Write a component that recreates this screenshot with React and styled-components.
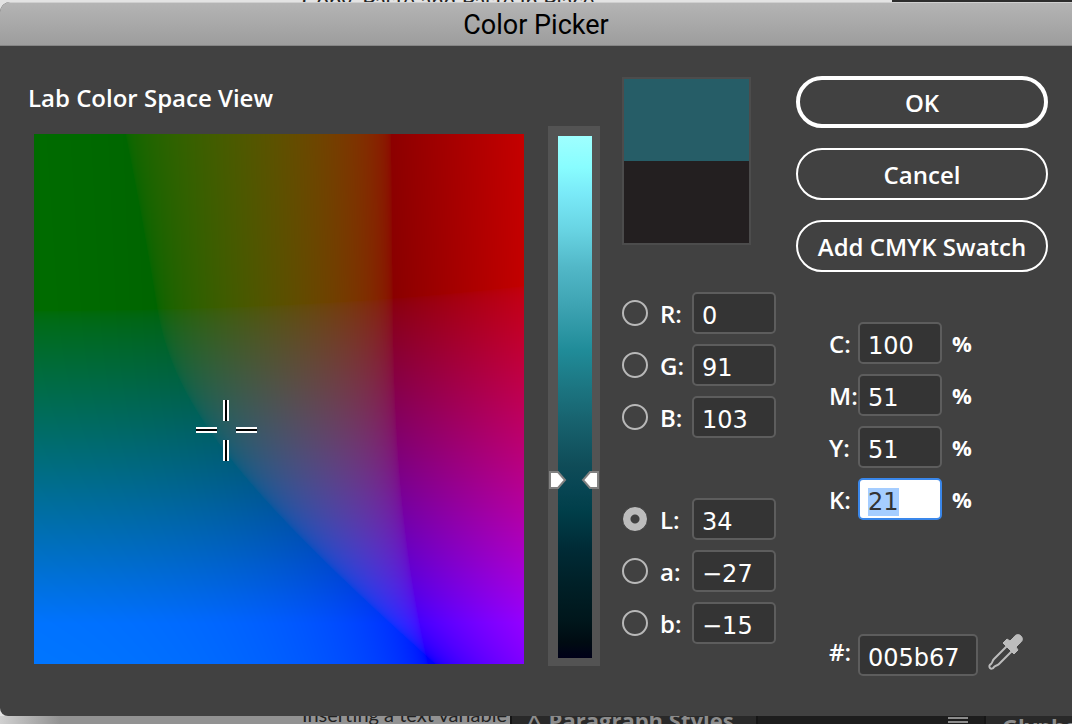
import * as React from "react";
import styled, { createGlobalStyle } from "styled-components";

const GlobalStyle = createGlobalStyle`
  * {
    box-sizing: border-box;
  }

  body {
    margin: 0;
    background-color: #232323;
  }
`;

const Page = styled.div`
  min-height: 100vh;
  display: flex;
  flex-direction: column;
  overflow: hidden;
  background: linear-gradient(90deg, #e3e3e3 892px, #2c2c2c 892px);
`;

const Strip = styled.div`
  height: ${(props) => props.height};
  display: flex;
  align-items: ${(props) => props.$align};
  overflow: hidden;
`;

const DocText = styled.div`
  flex: 0 0 ${(props) => props.width};
  height: 100%;
  padding-left: 302px;
  display: flex;
  align-items: inherit;
  overflow: hidden;
  white-space: nowrap;
  background: ${(props) => props.$bg};
  color: #222222;
  font: ${(props) => props.size}/20px "Lato", sans-serif;
`;

const PanelTab = styled.div`
  flex: ${(props) => props.$flex};
  height: 100%;
  padding: 0 16px;
  display: flex;
  align-items: ${(props) => props.$align || "center"};
  justify-content: ${(props) => props.$justify || "flex-start"};
  gap: 8px;
  overflow: hidden;
  white-space: nowrap;
  background-color: ${(props) => props.$bg};
  border-left: 2px solid #161616;
  color: #8c8c8c;
  font: 700 22px/20px "Open Sans", sans-serif;
`;

const Dialog = styled.main`
  background-color: #414141;
  border-radius: 10px 0 0 8px;
  overflow: hidden;
  color: white;
  font-family: "Open Sans", sans-serif;
`;

const TitleBar = styled.h1`
  margin: 0;
  height: 44px;
  border-top: 1px solid #cfcfcf;
  border-bottom: 1px solid #858585;
  background: linear-gradient(#b4b4b4, #9d9d9d);
  color: black;
  font: 400 27px/45px "Roboto", sans-serif;
  text-align: center;
`;

const Body = styled.form`
  display: flex;
  padding: 30px 24px 40px 28px;
`;

const FieldCol = styled.section`
  flex: 1;
  min-width: 0;
  margin-right: 24px;
`;

const FieldTitle = styled.h2`
  margin: 0 0 14px;
  font-size: 24px;
  font-weight: 600;
  line-height: 44px;
`;

const FieldCont = styled.div`
  position: relative;
  height: 530px;
  margin-left: 6px;
`;

const FieldCanvas = styled.canvas`
  display: block;
  width: 100%;
  height: 100%;
`;

const Crosshair = styled.svg`
  position: absolute;
  width: 62px;
  height: 62px;
  transform: translate(-50%, -50%);
`;

const SliderCont = styled.div`
  position: relative;
  flex: 0 0 52px;
  height: 540px;
  margin: 50px 22px 0 0;
  padding: 10px 8px 8px 10px;
  background-color: #535353;
`;

const Ramp = styled.div`
  height: 100%;
  background: linear-gradient(
    #9fffff,
    #88fdff 6%,
    #7aeaf8 11%,
    #68d4e3 18%,
    #52b8c8 25%,
    #3ca2b1 33%,
    #208c99 41%,
    #1c7682 48%,
    #186470 54%,
    #0f4c58 63%,
    #084654 67%,
    #003e49 72%,
    #002b36 79%,
    #002027 86%,
    #00161b 93%,
    #000b12 97%,
    #000018
  );
`;

const RangeInput = styled.input`
  position: absolute;
  inset: 0;
  width: 100%;
  height: 100%;
  margin: 0;
  opacity: 0;
  writing-mode: vertical-lr;
  direction: rtl;
`;

const Markers = styled.svg`
  position: absolute;
  left: 0;
  width: 52px;
  height: 18px;
  transform: translateY(-50%);
`;

const ValuesCol = styled.section`
  flex: 0 0 154px;
  margin: 1px 20px 0 0;
`;

const Swatch = styled.div`
  width: 129px;
  height: 168px;
  margin-bottom: 47px;
  border: 2px solid #4c4c4c;
  background: linear-gradient(#265d67 50%, #231f20 50%);
`;

const Group = styled.div`
  display: flex;
  flex-direction: column;
  gap: 10px;
  margin-bottom: ${(props) => props.$space || "0"};
`;

const Row = styled.div`
  display: flex;
  align-items: ${(props) => props.$align || "center"};
`;

const Radio = styled.input`
  appearance: none;
  flex: none;
  width: 26px;
  height: 26px;
  margin: 0 12px 0 0;
  border: 2px solid #b8b8b8;
  border-radius: 50%;

  &:checked {
    border-width: 1px;
    border-color: #414141;
    background: radial-gradient(circle, #414141 4px, #bcbcbc 5px);
  }
`;

const RowLabel = styled.label`
  flex: 0 0 ${(props) => props.width};
  padding-top: 2px;
  font-size: 24px;
  font-weight: 600;
  line-height: ${(props) => props.$line || "40px"};
  white-space: nowrap;
`;

const ValueInput = styled.input`
  flex: none;
  width: ${(props) => props.$width || "84px"};
  height: 42px;
  padding: 6px 8px 0;
  border: 2px solid #5d5d5d;
  border-radius: 5px;
  background-color: #343434;
  color: white;
  font-family: "DejaVu Sans", sans-serif;
  font-size: 24px;

  &:focus {
    outline: none;
    border-color: #3a87ea;
    background-color: white;
    color: #333333;
  }

  &::selection {
    background-color: #a5cdff;
    color: #333333;
  }
`;

const Percent = styled.span`
  margin-left: 10px;
  font-size: 22px;
  font-weight: 700;
`;

const ActionsCol = styled.section`
  flex: 0 0 252px;
`;

const Buttons = styled.div`
  display: flex;
  flex-direction: column;
  gap: 20px;
  margin-bottom: 50px;
`;

const Button = styled.button`
  height: 52px;
  padding: 0;
  border: ${(props) => (props.$primary ? "4px" : "2px")} solid white;
  border-radius: 26px;
  background: none;
  color: white;
  font: 600 24px "Open Sans", sans-serif;
`;

const Inks = styled.div`
  padding-left: 33px;
`;

const IconButton = styled.button`
  width: 36px;
  height: 36px;
  margin-left: 10px;
  padding: 0;
  border: 0;
  background: none;
`;

// Lab (D50) to Adobe RGB, out of gamut channels are clipped
function labToRgb(L, a, b) {
  const inv = (t) => (t > 6 / 29 ? t * t * t : (t - 16 / 116) / 7.787);
  const fy = (L + 16) / 116;
  const X = 0.9642 * inv(fy + a / 500);
  const Y = inv(fy);
  const Z = 0.8249 * inv(fy - b / 200);
  return [
    1.9625 * X - 0.6107 * Y - 0.3414 * Z,
    -0.9788 * X + 1.9161 * Y + 0.0334 * Z,
    0.0287 * X - 0.1407 * Y + 1.3493 * Z,
  ].map((v) => Math.round(255 * Math.pow(Math.min(1, Math.max(0, v)), 1 / 2.2)));
}

const lab = { L: 34, a: -27, b: -15 };

const rgbRows = [
  ["R", "0"],
  ["G", "91"],
  ["B", "103"],
];

const labRows = [
  ["L", "34"],
  ["a", "−27"],
  ["b", "−15"],
];

const cmykRows = [
  ["C", "100"],
  ["M", "51"],
  ["Y", "51"],
  ["K", "21"],
];

function ColorField() {
  const canvas = React.useRef(null);

  React.useLayoutEffect(() => {
    const { width, height } = canvas.current;
    const ctx = canvas.current.getContext("2d");
    const image = ctx.createImageData(width, height);
    for (let y = 0; y < height; y++) {
      for (let x = 0; x < width; x++) {
        const a = (x / width) * 255 - 129;
        const b = 128 - (y / height) * 255;
        image.data.set([...labToRgb(lab.L, a, b), 255], (y * width + x) * 4);
      }
    }
    ctx.putImageData(image, 0, 0);
  }, []);

  return (
    <FieldCont>
      <FieldCanvas ref={canvas} width={490} height={530} />
      <Crosshair
        viewBox="0 0 62 62"
        style={{
          left: `${((lab.a + 127) / 255) * 100}%`,
          top: `${((128 - lab.b) / 256) * 100}%`,
        }}
      >
        <path fill="white" d="M28 1h6v21h-6zM28 41h6v21h-6zM1 28h21v6H1zM41 28h21v6H41z" />
        <path fill="black" d="M30 1h2v21h-2zM30 41h2v21h-2zM1 30h21v2H1zM41 30h21v2H41z" />
      </Crosshair>
    </FieldCont>
  );
}

function Slider() {
  return (
    <SliderCont>
      <Ramp />
      <Markers viewBox="0 0 52 18" style={{ top: `${Math.floor(10 + (522 * (100 - lab.L)) / 100)}px` }}>
        <g fill="white" stroke="#808080" strokeWidth="2">
          <path d="M2 1h8l7 8-7 8H2z" />
          <path d="M50 1h-8l-7 8 7 8h8z" />
        </g>
      </Markers>
      <RangeInput type="range" min="0" max="100" defaultValue={lab.L} aria-label="Lightness" />
    </SliderCont>
  );
}

function ChannelRow({ name, value, checked = false }) {
  return (
    <Row>
      <Radio type="radio" name="channel" defaultChecked={checked} aria-label={name} />
      <RowLabel width="32px" htmlFor={"channel-" + name}>{name}:</RowLabel>
      <ValueInput id={"channel-" + name} defaultValue={value} />
    </Row>
  );
}

function InkRow({ name, value, inputRef }) {
  return (
    <Row>
      <RowLabel width="29px" htmlFor={"ink-" + name}>{name}:</RowLabel>
      <ValueInput id={"ink-" + name} defaultValue={value} ref={inputRef} />
      <Percent>%</Percent>
    </Row>
  );
}

function Eyedropper() {
  return (
    <svg width="36" height="36" viewBox="0 0 36 36">
      <path
        d="M19 12 6 25c-2 2-1 3-3 5-2 1-2 3-1 4s3 1 4-1c2-2 3-1 5-3l13-13"
        fill="none"
        stroke="#bcbcbc"
        strokeWidth="2"
        strokeLinejoin="round"
      />
      <path
        d="M15 9l4-4 3 2 4-4c2-3 5-3 7-1s2 5-1 7l-4 4 2 3-4 4z"
        fill="#bcbcbc"
        stroke="#bcbcbc"
        strokeLinejoin="round"
      />
    </svg>
  );
}

function MenuIcon() {
  return (
    <svg width="20" height="10" viewBox="0 0 20 10">
      <path d="M0 3h20M0 7h20" stroke="#8c8c8c" strokeWidth="2" />
    </svg>
  );
}

export default function App() {
  const blackInk = React.useRef(null);

  React.useEffect(() => {
    blackInk.current.focus();
    blackInk.current.select();
  }, []);

  return (
    <Page>
      <GlobalStyle />
      <Strip height="2px" $align="center">
        <DocText width="892px" size="22px" $bg="#e3e3e3">Copy, Paste and Paste in Place</DocText>
      </Strip>
      <Dialog>
        <TitleBar>Color Picker</TitleBar>
        <Body onSubmit={(e) => e.preventDefault()}>
          <FieldCol>
            <FieldTitle>Lab Color Space View</FieldTitle>
            <ColorField />
          </FieldCol>
          <Slider />
          <ValuesCol>
            <Swatch />
            <Group $space="60px">
              {rgbRows.map(([name, value]) => (
                <ChannelRow key={name} name={name} value={value} />
              ))}
            </Group>
            <Group>
              {labRows.map(([name, value]) => (
                <ChannelRow key={name} name={name} value={value} checked={name === "L"} />
              ))}
            </Group>
          </ValuesCol>
          <ActionsCol>
            <Buttons>
              <Button $primary>OK</Button>
              <Button type="button">Cancel</Button>
              <Button type="button">Add CMYK Swatch</Button>
            </Buttons>
            <Inks>
              <Group $space="114px">
                {cmykRows.map(([name, value]) => (
                  <InkRow
                    key={name}
                    name={name}
                    value={value}
                    inputRef={name === "K" ? blackInk : undefined}
                  />
                ))}
              </Group>
              <Row $align="flex-start">
                <RowLabel width="29px" $line="32px" htmlFor="hex">#:</RowLabel>
                <ValueInput id="hex" $width="120px" defaultValue="005b67" />
                <IconButton type="button" aria-label="Eyedropper">
                  <Eyedropper />
                </IconButton>
              </Row>
            </Inks>
          </ActionsCol>
        </Body>
      </Dialog>
      <Strip height="8px" $align="flex-end">
        <DocText width="510px" size="20px" $bg="linear-gradient(90deg, #d0d0d0, #929292 60px)">
          Inserting a text variable
        </DocText>
        <PanelTab $flex="0 0 246px" $bg="#292929">
          <span>^</span>
          <span>Paragraph Styles</span>
        </PanelTab>
        <PanelTab $flex="1" $bg="#1d1d1d" $justify="flex-end">
          <MenuIcon />
        </PanelTab>
        <PanelTab $flex="0 0 88px" $bg="#292929" $align="flex-start">Glyphs</PanelTab>
      </Strip>
    </Page>
  );
}
